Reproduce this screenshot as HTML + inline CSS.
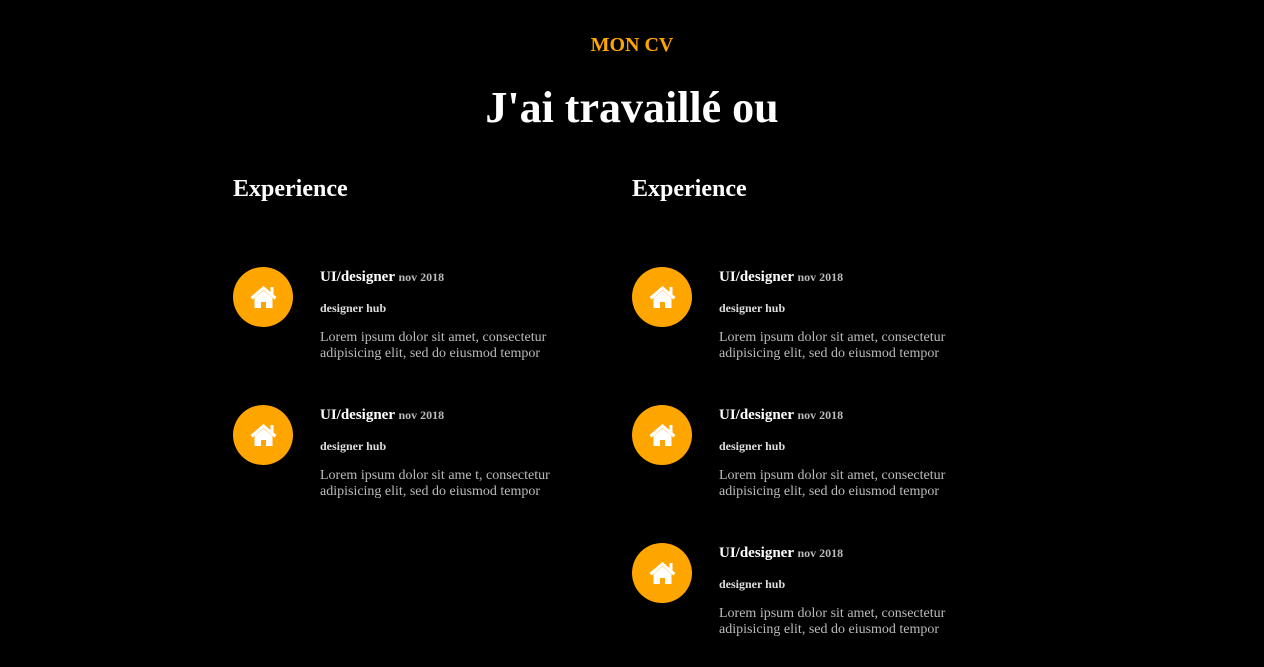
<!DOCTYPE html>
<html><head><meta charset="utf-8"><style>
html,body{margin:0;background:#000;width:1264px;height:667px;overflow:hidden;font-family:"Liberation Serif",serif;}
.a{position:absolute;white-space:nowrap;}
.mc{left:0;width:1264px;text-align:center;top:34px;color:#ffa500;font-weight:bold;font-size:20px;}
.t{left:0;width:1264px;text-align:center;top:82px;color:#fff;font-weight:bold;font-size:44px;}
.h{color:#fff;font-weight:bold;font-size:24px;top:176px;}
.c{position:absolute;width:60px;height:60px;border-radius:50%;background:#ffa500;}
.c svg{position:absolute;left:17px;top:5px;}
.it{position:absolute;}
.r{position:absolute;left:87px;top:2px;color:#fff;font-weight:bold;font-size:15px;white-space:nowrap;}
.r small{color:#bbb;font-size:12px;}
.s{position:absolute;left:87px;top:34px;color:#ddd;font-weight:bold;font-size:12px;white-space:nowrap;}
.l{position:absolute;left:87px;top:63px;color:#bbb;font-size:14px;line-height:16px;white-space:nowrap;}
</style></head><body>
<div class="a mc">MON CV</div>
<div class="a t">J'ai travaillé ou</div>
<div class="a h" style="left:233px">Experience</div>
<div class="a h" style="left:632px">Experience</div>

<div class="it" style="left:233px;top:267px"><div class="c"><svg width="27" height="50" viewBox="0 0 27 50"><path d="M13.5 14 L0.5 25 L2.5 27.5 L13.5 18 L24.5 27.5 L26.5 25 L23.5 22.5 L23.5 15 L20.5 15 L20.5 20 Z" fill="#fff"/><path d="M4.5 26 L13.5 18.5 L22.5 26 L22.5 36 L16 36 L16 30 L11 30 L11 36 L4.5 36 Z" fill="#fff"/></svg></div><div class="r">UI/designer <small>nov 2018</small></div><div class="s">designer hub</div><div class="l">Lorem ipsum dolor sit amet, consectetur<br>adipisicing elit, sed do eiusmod tempor</div></div>

<div class="it" style="left:233px;top:405px"><div class="c"><svg width="27" height="50" viewBox="0 0 27 50"><path d="M13.5 14 L0.5 25 L2.5 27.5 L13.5 18 L24.5 27.5 L26.5 25 L23.5 22.5 L23.5 15 L20.5 15 L20.5 20 Z" fill="#fff"/><path d="M4.5 26 L13.5 18.5 L22.5 26 L22.5 36 L16 36 L16 30 L11 30 L11 36 L4.5 36 Z" fill="#fff"/></svg></div><div class="r">UI/designer <small>nov 2018</small></div><div class="s">designer hub</div><div class="l">Lorem ipsum dolor sit ame t, consectetur<br>adipisicing elit, sed do eiusmod tempor</div></div>

<div class="it" style="left:632px;top:267px"><div class="c"><svg width="27" height="50" viewBox="0 0 27 50"><path d="M13.5 14 L0.5 25 L2.5 27.5 L13.5 18 L24.5 27.5 L26.5 25 L23.5 22.5 L23.5 15 L20.5 15 L20.5 20 Z" fill="#fff"/><path d="M4.5 26 L13.5 18.5 L22.5 26 L22.5 36 L16 36 L16 30 L11 30 L11 36 L4.5 36 Z" fill="#fff"/></svg></div><div class="r">UI/designer <small>nov 2018</small></div><div class="s">designer hub</div><div class="l">Lorem ipsum dolor sit amet, consectetur<br>adipisicing elit, sed do eiusmod tempor</div></div>

<div class="it" style="left:632px;top:405px"><div class="c"><svg width="27" height="50" viewBox="0 0 27 50"><path d="M13.5 14 L0.5 25 L2.5 27.5 L13.5 18 L24.5 27.5 L26.5 25 L23.5 22.5 L23.5 15 L20.5 15 L20.5 20 Z" fill="#fff"/><path d="M4.5 26 L13.5 18.5 L22.5 26 L22.5 36 L16 36 L16 30 L11 30 L11 36 L4.5 36 Z" fill="#fff"/></svg></div><div class="r">UI/designer <small>nov 2018</small></div><div class="s">designer hub</div><div class="l">Lorem ipsum dolor sit amet, consectetur<br>adipisicing elit, sed do eiusmod tempor</div></div>

<div class="it" style="left:632px;top:543px"><div class="c"><svg width="27" height="50" viewBox="0 0 27 50"><path d="M13.5 14 L0.5 25 L2.5 27.5 L13.5 18 L24.5 27.5 L26.5 25 L23.5 22.5 L23.5 15 L20.5 15 L20.5 20 Z" fill="#fff"/><path d="M4.5 26 L13.5 18.5 L22.5 26 L22.5 36 L16 36 L16 30 L11 30 L11 36 L4.5 36 Z" fill="#fff"/></svg></div><div class="r">UI/designer <small>nov 2018</small></div><div class="s">designer hub</div><div class="l">Lorem ipsum dolor sit amet, consectetur<br>adipisicing elit, sed do eiusmod tempor</div></div>
</body></html>
